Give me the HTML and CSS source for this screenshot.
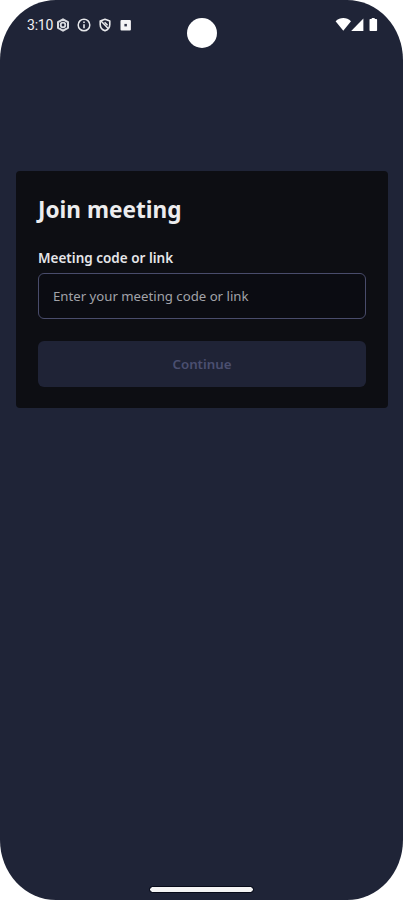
FILE: index.html
```html
<!DOCTYPE html>
<html lang="en">
<head>
    <meta charset="UTF-8">
    <meta name="viewport" content="width=device-width, initial-scale=1.0">
    <title>Join meeting</title>
    <link rel="stylesheet" href="styles.css">
</head>
<body>
    <div class="screen">
        <header class="statusbar">
            <span class="time">3:10</span>
            <div class="notifications">
                <svg width="14" height="14" viewBox="0 0 14 14" fill="none" stroke="#d9dbe0">
                    <path d="M7 1.3 12 4.2v5.6L7 12.7 2 9.8V4.2z" stroke-width="2" stroke-linejoin="round"/>
                    <circle cx="7" cy="7" r="2.3" stroke-width="1.8"/>
                </svg>
                <svg width="14" height="14" viewBox="0 0 14 14" fill="none" stroke="#e6e7ea">
                    <circle cx="7" cy="7" r="5.8" stroke-width="1.5"/>
                    <path d="M7 6.2v4M7 3.6v1.4" stroke-width="1.6"/>
                </svg>
                <svg width="14" height="14" viewBox="0 0 14 14" fill="none" stroke="#e6e7ea">
                    <path d="M7 1.2 11.8 3v3.5c0 2.9-1.8 5.2-4.8 6.3-3-1.1-4.8-3.4-4.8-6.3V3z" stroke-width="1.6" stroke-linejoin="round"/>
                    <path d="M3 3l7.2 7.6M6.6 4.2l3 3" stroke-width="1.5"/>
                </svg>
                <svg width="14" height="14" viewBox="0 0 14 14">
                    <rect x="1.5" y="2" width="10.4" height="10.4" rx="1" fill="#f4f4f6"/>
                    <rect x="5.4" y="5.9" width="2.5" height="2.5" fill="#33374a"/>
                </svg>
            </div>
            <div class="camera"></div>
            <svg class="system" width="44" height="16" viewBox="0 0 44 16" fill="#fff">
                <path d="M.6 4.3C5-.1 11.6-.1 16 4.3L8.3 13.8z"/>
                <path d="M28.4 1.5v12.5H16.2z"/>
                <path d="M35.300 2h1.400V1h3V2H41.300q.8 0 .8.800v10.400q0 .8-.8.800H35.300q-.8 0-.8-.8V2.800q0-.8.8-.8z"/>
            </svg>
        </header>
        <main class="card">
            <h1 class="title">Join meeting</h1>
            <label class="label" for="code">Meeting code or link</label>
            <input type="text" class="textbox" id="code" placeholder="Enter your meeting code or link">
            <button class="button" disabled>Continue</button>
        </main>
        <div class="home"></div>
    </div>
</body>
</html>
```
FILE: styles.css
```css
* {
    box-sizing: border-box;
}

body {
    margin: 0;
    background-color: #fff;
    font-family: "Noto Sans", sans-serif;
}

.screen {
    display: flex;
    flex-direction: column;
    height: 900px;
    background-color: #1f2437;
    border-radius: 56px / 60px;
    overflow: hidden;
}

.statusbar {
    display: grid;
    grid-template-columns: 29px 131px 29px 1fr;
    height: 171px;
    padding: 17px 24px 0 27px;
    align-items: start;
}

.time {
    color: #f0f0f2;
    font: 14px/17px Roboto, sans-serif;
    letter-spacing: -0.2px;
}

.notifications {
    display: flex;
    gap: 7px;
    padding-top: 1px;
}

.camera {
    width: 30px;
    height: 30px;
    margin-top: 0.5px;
    border-radius: 50%;
    background-color: #fff;
}

.system {
    justify-self: end;
}

.card {
    display: flex;
    flex-direction: column;
    width: 372px;
    height: 237px;
    margin-left: 16px;
    padding: 23px 22px 21px;
    background-color: #0d0e13;
    border-radius: 4px;
}

.title {
    margin: 0 0 20px;
    color: #ececee;
    font-size: 22.6px;
    line-height: 32px;
    font-weight: 700;
}

.label {
    margin-bottom: 3px;
    color: #e6e6e9;
    font-size: 13.5px;
    line-height: 24px;
    font-weight: 600;
}

.textbox {
    height: 46px;
    padding: 0 14px 1px;
    color: #ececee;
    background-color: #0b0c12;
    border: 1px solid #494c6b;
    border-radius: 6px;
    font-family: inherit;
    font-size: 13.2px;
}

.textbox::placeholder {
    color: #a2a3a9;
}

.button {
    height: 46px;
    margin-top: 22px;
    padding-bottom: 2px;
    color: #4b4f70;
    background-color: #1f2336;
    border: 0;
    border-radius: 6px;
    font-family: inherit;
    font-size: 13.3px;
    font-weight: 600;
}

.home {
    width: 103px;
    height: 5px;
    margin: auto auto 8px;
    background-color: #f4f4f4;
    border-radius: 3px;
    outline: 1px solid #070a18;
}
```
